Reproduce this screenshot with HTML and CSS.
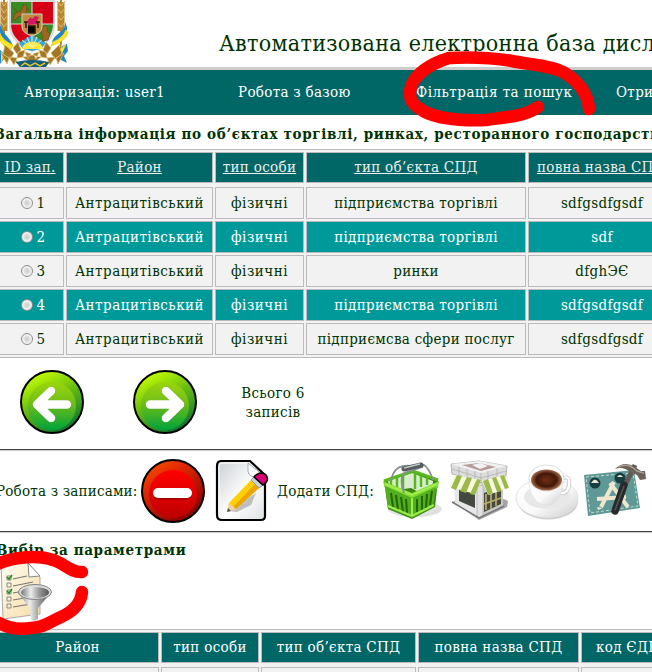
FILE: index.html
```html
<!DOCTYPE html>
<html lang="uk">
<head>
<meta charset="utf-8">
<title>Електронна база</title>
<link rel="stylesheet" href="styles.css">
</head>
<body>
<header class="top">
<svg class="crest" viewBox="0 0 70 67">
<g fill="none" stroke="#b9852d" stroke-width="2"><path d="M4 0V43Q6 55 19 64M61 0V43Q60 55 47 64"/><path stroke-width="7" d="M4 2V31M61 2V31"/><path stroke="#ddbc75" stroke-width="1" d="M1 1l3 5 4-5M1 8l3 5 4-5M1 15l3 5 4-5M1 22l3 5 4-5M57 1l4 5 4-5M57 8l4 5 4-5M57 15l4 5 4-5M57 22l4 5 4-5"/></g>
<path d="M65 22C66 34 53 32 52 44C57 40 68 40 67 27M0 23C1 34 11 37 13 46C6 41 0 38 0 31M67 44Q56 47 59 59l8 4-3-7 4-5zM0 50q6 3 4 9l-4 5z" fill="#2185ca"/>
<path d="M66 30Q63 38 53 42l-2 4q15-5 17-14zM0 34q3 7 13 11l-2 4Q2 46 0 40zM66 45Q54 51 59 60M1 51q4 4 0 11" fill="#ffe52a" stroke="#eed317"/>
<path d="M9 0H55V27Q54 43 32 52Q10 43 9 27Z" fill="#d9d9d9"/><path d="M11 2H32V24H11zM32 24H53Q53 40 32 49z" fill="#388a22"/><path d="M32 2H53V24H32zM11 24H32V49Q11 40 11 24z" fill="#d50015"/>
<path d="M32 2V49M11 24H53" stroke="#d9d9d9"/>
<path d="M19 43L32 35 46 43 41 49 32 51 23 49z" fill="#34a8e0"/><path d="M22 49a10 7 0 0 1 21 0z" fill="#ffe838"/><path d="M32 48V36M32 48L22 40M32 48L42 40M32 48L27 37M32 48L37 37" stroke="#fff29b"/>
<path d="M13 19l2-6 6-2 3-7 3 3-1 3 3-1-3 4 1 6-3-4-6 2-4 4zM17 12l-4-5M43 27l2-2 3 3-1 3 3 3-2 6-6 1 1-5-2-4z" fill="#9a681f" stroke="#704c18" stroke-width=".8"/>
<path d="M22 14H42V27Q42 33 32 36Q22 33 22 27Z" fill="#c18c38" stroke="#cfcfcf"/><path d="M28 25V20l3-3 1 2 3-3 4 1-2 4 1 3z" fill="#d51661"/><path d="M28 26h7v7h-7M24 22h4M36 22h4M26 22v6M38 22v6" stroke="#241b12" stroke-width="1.5"/>
<g fill="#a27628" stroke="#e0bb6b" stroke-width=".7"><path d="M5 45l9 8-4 6-7-5zM1 53l8 5-2 6zM13 48l5-6 3 8-4 4zM18 52l7-2-2 7-6 1zM25 52l6 2-3 5zM59 45l-8 8 4 6 7-5zM64 53l-8 5 2 6zM51 48l-5-6-3 8 4 4zM46 52l-7-2 2 7 6 1zM39 52l-6 2 3 5zM9 57l8 1-3 7zM55 57l-8 1 3 7zM23 57l9-2 9 2-5 4h-8z"/></g>
<path d="M16 62q16-4 33 0l-3 5H20z" fill="#145d7b"/><path d="M21 66l4-3 5 3 5-3 5 3 5-3" fill="none" stroke="#e1c526" stroke-width="1.5"/>
</svg>
<h1>Автоматизована електронна база дисл</h1>
</header>
<nav class="menu"><span class="m1">Авторизація: user1</span><span class="m2">Робота з базою</span><span class="m3">Фільтрація та пошук</span><span class="m4">Отри</span></nav>
<h2 class="caption">Загальна інформація по об’єктах торгівлі, ринках, ресторанного господарств</h2>
<section class="sheet records">
<div class="row head"><a>ID зап.</a><a>Район</a><a>тип особи</a><a>тип об’єкта СПД</a><a class="clip">повна назва СПД</a></div>
<div class="row"><span><i class="radio"></i>1</span><span>Антрацитівський</span><span>фізичні</span><span>підприємства торгівлі</span><span>sdfgsdfgsdf</span></div>
<div class="row alt"><span><i class="radio"></i>2</span><span>Антрацитівський</span><span>фізичні</span><span>підприємства торгівлі</span><span>sdf</span></div>
<div class="row"><span><i class="radio"></i>3</span><span>Антрацитівський</span><span>фізичні</span><span>ринки</span><span>dfghЭЄ</span></div>
<div class="row alt"><span><i class="radio"></i>4</span><span>Антрацитівський</span><span>фізичні</span><span>підприємства торгівлі</span><span>sdfgsdfgsdf</span></div>
<div class="row"><span><i class="radio"></i>5</span><span>Антрацитівський</span><span>фізичні</span><span>підприємсва сфери послуг</span><span>sdfgsdfgsdf</span></div>
</section>
<section class="pager">
<svg class="icon" viewBox="0 0 64 64"><defs><linearGradient id="rim" x1=".3" y1="0" x2=".8" y2="1"><stop stop-color="#c6ff00"/><stop offset=".45" stop-color="#65ba13"/><stop offset="1" stop-color="#006b36"/></linearGradient><linearGradient id="green" x2="0" y2="1"><stop stop-color="#9bd60c"/><stop offset=".45" stop-color="#70bd18"/><stop offset="1" stop-color="#00a33b"/></linearGradient></defs><circle cx="32" cy="32" r="31" fill="url(#rim)" stroke="#000" stroke-width="2"/><circle cx="32" cy="36" r="24" fill="url(#green)"/><path d="M47 35H18M31 21L17 35L31 48" fill="none" stroke="#3d922a" stroke-width="9" stroke-linecap="round" stroke-linejoin="round" opacity=".4"/><path d="M47 34.5H18M31 21L17 34.5L31 48" fill="none" stroke="#fff" stroke-width="8.5" stroke-linecap="round" stroke-linejoin="round"/></svg>
<svg class="icon" viewBox="0 0 64 64"><circle cx="32" cy="32" r="31" fill="url(#rim)" stroke="#000" stroke-width="2"/><circle cx="32" cy="36" r="24" fill="url(#green)"/><path d="M17 35H46M33 21L47 35L33 48" fill="none" stroke="#3d922a" stroke-width="9" stroke-linecap="round" stroke-linejoin="round" opacity=".4"/><path d="M17 34.5H46M33 21L47 34.5L33 48" fill="none" stroke="#fff" stroke-width="8.5" stroke-linecap="round" stroke-linejoin="round"/></svg>
<p>Всього 6<br>записів</p>
</section>
<section class="tools">
<span class="edit-label">Робота з записами:</span>
<svg class="icon" viewBox="0 0 64 64"><defs><linearGradient id="redrim" x2=".7" y2="1"><stop stop-color="#ff5b00"/><stop offset=".35" stop-color="#e32a00"/><stop offset="1" stop-color="#840000"/></linearGradient><linearGradient id="red" x2="0" y2="1"><stop stop-color="#f00"/><stop offset=".5" stop-color="#e00000"/><stop offset="1" stop-color="#bd0000"/></linearGradient></defs><circle cx="32" cy="32" r="31" fill="url(#redrim)" stroke="#000" stroke-width="2"/><circle cx="32" cy="35" r="24" fill="url(#red)"/><rect x="12" y="30" width="39" height="11" rx="5" fill="#8a0000" opacity=".5"/><rect x="12" y="29" width="39" height="10" rx="5" fill="#fff"/></svg>
<svg class="icon" viewBox="0 0 64 64"><defs><linearGradient id="paper" x1="0" y1="0" x2="1" y2="1"><stop stop-color="#c9ced2"/><stop offset=".55" stop-color="#fff"/><stop offset="1" stop-color="#dde0e2"/></linearGradient></defs><path d="M12 2H41L56 16V57Q56 61 52 61H13Q8 61 8 56V7Q8 2 12 2Z" fill="url(#paper)" stroke="#000" stroke-width="2.2"/><path d="M10 53V7Q10 4 14 4H39" fill="none" stroke="#fff"/><path d="M39 4V12Q40 19 49 18L55 17Z" fill="#fff" stroke="#9eafbd"/><path d="M19 52L47 34 42 46 28 53z" fill="#888" opacity=".5"/><path d="M18 53L20 44 42 21 50 29 27 50Z" fill="#ffd000"/><path d="M24 48L46 25 50 29 27 50Z" fill="#eca500"/><path d="M20 44L27 50 18 53Z" fill="#eed1aa"/><path d="M18 53l1-4 3 3" fill="#555"/><path d="M42 21L50 29 54 26 45 18Z" fill="#ccd3dc" stroke="#8e98a4"/><path d="M45 18Q51 11 57 16Q61 22 54 26Z" fill="#d80079" stroke="#000" stroke-width="1.5"/></svg>
<span class="add-label">Додати СПД:</span>
<svg class="icon" viewBox="0 0 64 64"><ellipse cx="36" cy="50" rx="27" ry="8" fill="#ccc" opacity=".6"/><path d="M5 22L34 12 59 21 56 48 33 60 9 50Z" fill="#37850f"/><path d="M9 22L33 14 54 22 53 40 32 29 11 32Z" fill="#d9efcc"/><path d="M12 29V18M18 29V16M24 30V14M36 30V14M42 28V16M48 26V18" stroke="#58b620" stroke-width="2.5"/><path d="M4 22L33 34 60 22 59 29 34 42 6 30Z" fill="#83d936"/><path d="M6 27L33 39 57 28 54 48 33 59 9 49Z" fill="#51ae1c"/><g fill="none" stroke="#246508" stroke-width="2"><path d="M12 34l2 14M17 36l2 15M22 38l2 15M27 40l1 14M38 40v13M43 37v14M48 35l-1 14M53 32l-2 14"/></g><path d="M33 39V58M9 47l24 10 22-11M6 25l27 11 25-11" fill="none" stroke="#a0ed4d" stroke-width="2"/><path d="M5 22L34 12 59 21" fill="none" stroke="#57b91b" stroke-width="3"/><path d="M12 22Q15 4 33 7L45 6Q50 9 54 21M25 34Q20 21 25 14L44 8" fill="none" stroke="#888f91" stroke-width="1.8"/><path d="M25 10L42 6" stroke="#555b5d" stroke-width="5" stroke-linecap="round"/><path d="M25 9L41 5" stroke="#bfc6c8" stroke-width="1.5"/></svg>
<svg class="icon" viewBox="0 0 64 64"><path d="M6 43L32 61 60 48 61 42 31 28z" fill="#a5a5a5"/><path d="M7 18L35 24 56 17V47L32 59 8 44Z" fill="#e7e7e7"/><path d="M35 22L56 17V47L32 59Z" fill="#c9c9c9"/><path d="M12 30L28 34V49L12 42zM37 34L54 28V45L37 53z" fill="#444a42"/><path d="M39 35V51M44 33V50M49 31V47M37 45L54 39" stroke="#bcad69" stroke-width="1.7"/><path d="M30 27l6-1v30l-4 3-2-1z" fill="#e1e1e1" stroke="#aaa" stroke-width=".6"/><path d="M4 5L32 2 60 7 59 17 34 24 5 15Z" fill="#ddd" stroke="#999" stroke-width=".7"/><path d="M4 5L32 2 60 7 34 14Z" fill="#f1f1f1"/><path d="M15 6L32 4 49 8 34 12Z" fill="#b29c98"/><path d="M25 6l8-2 8 3-8 3z" fill="#f3f3f3"/><path d="M5 10l29 9 25-7M12 8v8M20 10v8M28 12v9M34 14v10M41 12v10M50 9v9" fill="none" stroke="#aaa" stroke-width=".7"/><path d="M7 16L34 21 28 35 2 28ZM35 22L57 16 62 29 41 36Z" fill="#f8f8df"/><path d="M10 16L15 17 9 31 4 29ZM20 18L25 19 19 34 13 32ZM30 20L34 21 28 36 23 35ZM36 22L41 20 46 34 41 36ZM45 19L49 18 55 32 50 33ZM53 17L57 16 62 29 58 30Z" fill="#9bb94b"/><path d="M5 43l27 16 25-12" fill="none" stroke="#777" stroke-width="1.5"/></svg>
<svg class="icon" viewBox="0 0 64 64"><defs><radialGradient id="coffee"><stop stop-color="#713017"/><stop offset=".65" stop-color="#411809"/><stop offset="1" stop-color="#a66b4b"/></radialGradient><linearGradient id="china" x2="1" y2="1"><stop stop-color="#fff"/><stop offset=".55" stop-color="#fafafa"/><stop offset="1" stop-color="#ccc"/></linearGradient></defs><ellipse cx="33" cy="43" rx="30" ry="17.5" fill="#bbb" opacity=".7"/><ellipse cx="32" cy="39" rx="31" ry="19.5" fill="url(#china)" stroke="#e1e1e1"/><ellipse cx="32" cy="38" rx="23" ry="12" fill="#e8e8e8"/><path d="M46 20Q56 15 54 26Q53 36 42 34" fill="none" stroke="#c7c7c7" stroke-width="4"/><path d="M46 20Q56 15 54 26Q53 36 42 34" fill="none" stroke="#fff" stroke-width="2.4"/><path d="M14 17Q13 34 22 43Q32 50 40 43Q48 35 49 17Z" fill="url(#china)" stroke="#ddd" stroke-width=".6"/><ellipse cx="31.5" cy="19" rx="17.5" ry="13" fill="#fff" stroke="#ddd"/><ellipse cx="31.5" cy="21" rx="15.5" ry="10.5" fill="url(#coffee)"/></svg>
<svg class="icon" viewBox="0 0 64 64"><path d="M1 16L51 11 57 49 5 57Z" fill="#5f9997"/><path d="M3 18L50 14 55 47 7 54Z" fill="none" stroke="#cadbc4" stroke-dasharray="3 2"/><circle cx="12" cy="24" r="5.5" fill="#173c42"/><path d="M8 24q4-7 8 0z" fill="#eee5ca"/><circle cx="37" cy="19" r="5.5" fill="#173c42"/><path d="M34 18q3-4 6 0z" fill="#eee5ca"/><g fill="none" stroke="#eee6cf" stroke-width="4"><path d="M31 23L18 48M27 24L45 48M14 40L43 38"/></g><path d="M14 48l1 3 5-2" fill="#eee6cf"/><path d="M42 26L52 6" stroke="#625b53" stroke-width="5"/><path d="M41 26L32 52" stroke="#29292a" stroke-width="7.5" stroke-linecap="round"/><path d="M41 27L32 51" stroke="#555" stroke-width="1.5"/><path d="M32 10Q41 1 52 8L58 12 62 12 63 20 57 21 54 16 47 13Q40 7 32 10Z" fill="#6b625a"/><path d="M35 8q10-5 19 4l7 2" fill="none" stroke="#aaa197" stroke-width="1.5"/></svg>
</section>
<h2 class="filter-title">Вибір за параметрами</h2>
<section class="filter">
<svg viewBox="0 0 54 64"><defs><linearGradient id="sheet" x2="1" y2="1"><stop stop-color="#fffdf0"/><stop offset="1" stop-color="#f5dca6"/></linearGradient><linearGradient id="metal"><stop stop-color="#777"/><stop offset=".35" stop-color="#eee"/><stop offset=".65" stop-color="#999"/><stop offset="1" stop-color="#555"/></linearGradient></defs><path d="M1 2L28 1 40 15V52L3 57Z" fill="url(#sheet)" stroke="#aaa"/><path d="M28 1l1 14 11-1z" fill="#fff" stroke="#888"/><path d="M13 17L27 14M13 24L33 20M13 31L29 28M13 38L31 35M13 45L31 42" stroke="#777" stroke-width="1.1"/><path d="M7 14h4v4H7zM7 21h4v4H7zM7 28h4v4H7zM7 35h4v4H7zM7 42h4v4H7z" fill="none" stroke="#8a8a82"/><path d="M7 15l2 2 3-4M7 29l2 2 3-4" fill="none" stroke="#159116" stroke-width="1.5"/><path d="M18 31L30 46 31 58Q35 60 38 57V46L51 31Z" fill="url(#metal)"/><ellipse cx="35" cy="30" rx="16.5" ry="7.5" fill="#ddd" stroke="#828282"/><ellipse cx="35" cy="30.5" rx="14" ry="5.5" fill="url(#metal)"/></svg>
</section>
<section class="sheet results">
<div class="row head"><span>Район</span><span>тип особи</span><span>тип об’єкта СПД</span><span>повна назва СПД</span><span class="clip">код ЄДРПОУ</span></div>
<div class="row"><span></span><span></span><span></span><span></span><span></span></div>
</section>
<svg class="marks" viewBox="0 0 652 672"><path d="M589 109C588 93 577 80 563 72C549 65 532 65 512 61C487 57 468 57 449 58C433 63 417 72 411 86C408 100 411 104 425 112C440 119 462 121 486 120C507 117 526 116 538 107"/><path d="M82 572C71 573 64 563 53 560C39 555 15 556 -5 565M82 592C81 604 73 611 63 616C51 621 44 628 31 628C18 630 6 628 -6 620"/></svg>
</body>
</html>
```
FILE: styles.css
```css
* { box-sizing: border-box; }
body {
  margin: 0; width: 652px; height: 672px; overflow: hidden; position: relative;
  background: #fff; color: #003300;
  font: 15px/19px "DejaVu Serif Condensed", "DejaVu Serif", serif;
  font-stretch: condensed; white-space: nowrap; letter-spacing: .3px;
}
h1, h2, p { margin: 0; }
.top { height: 70px; border-bottom: 3px solid #ccc; display: flex; }
.crest { width: 70px; height: 67px; flex: none; }
h1 { font-size: 23px; font-weight: 400; line-height: 30px; letter-spacing: .3px; margin: 28px 0 0 149px; }
.menu { height: 45px; background: #006666; color: #fff; display: grid; grid-template-columns: 214px 178px 200px 60px; align-items: center; }
.m1, .m2, .m3, .m4 { padding-left: 24px; }
.m3 { letter-spacing: .48px; }
h2 { font-size: 15px; font-weight: 700; letter-spacing: .66px; }
.caption { height: 34px; padding-top: 10px; margin-left: -5px; overflow: hidden; }
.sheet { background: #f2f2f2; border: solid #bbb; border-width: 1px 0; padding: 2px 0; display: flex; flex-direction: column; gap: 2px; overflow: hidden; }
.row { display: grid; column-gap: 2px; height: 32px; }
.row > * { border: 1px solid #bbb; display: flex; align-items: center; justify-content: center; }
.records .row { grid-template-columns: 68px 147px 89px 220px 148px; margin-left: -4px; }
.records .row:not(.head) > :first-child { padding-left: 6px; }
.records .row:not(.head) > :nth-child(2), .records .row:not(.head) > :nth-child(3) { letter-spacing: .5px; }
.row.head { height: 31px; margin-bottom: 2px; color: #fff; }
.head > * { background: #006666; }
.head a { text-decoration: underline; color: #eee; }
.row .clip { justify-content: flex-start; padding-left: 8px; }
.alt > * { background: #009999; color: #fff; }
.radio { width: 12px; height: 12px; border: 1px solid #8d8d8d; border-radius: 50%; margin-right: 4px; background: radial-gradient(#ccc, #ddd 35%, #fff 70%); box-shadow: inset 0 0 0 1px #eee; }
.icon { width: 64px; height: 64px; flex: none; }
.pager { height: 91px; display: flex; padding: 12px 0 0 20px; }
.pager .icon + .icon { margin-left: 49px; }
.pager p { width: 110px; text-align: center; margin: 14px 0 0 21px; }
.tools { height: 82px; border-top: 1px solid #444; display: flex; align-items: center; gap: 4px; padding-top: 1px; box-shadow: inset 0 1px #ccc; }
.edit-label { width: 141px; margin-left: -4px; letter-spacing: .2px; flex: none; }
.add-label { width: 98px; flex: none; }
.filter-title { border-top: 1px solid #444; box-shadow: inset 0 1px #ccc; height: 31px; padding: 9px 0 0; text-indent: -4px; }
.filter { height: 67px; }
.filter svg { width: 54px; height: 64px; display: block; }
.results { height: 60px; }
.results .row { grid-template-columns: 163px 98px 155px 161px 120px; margin-left: -4px; flex: none; }
.results .clip { padding-left: 14px; }
.marks { position: absolute; left: 0; top: 0; width: 652px; height: 672px; fill: none; stroke: #f00; stroke-width: 12.5; stroke-linecap: round; stroke-linejoin: round; }
```
